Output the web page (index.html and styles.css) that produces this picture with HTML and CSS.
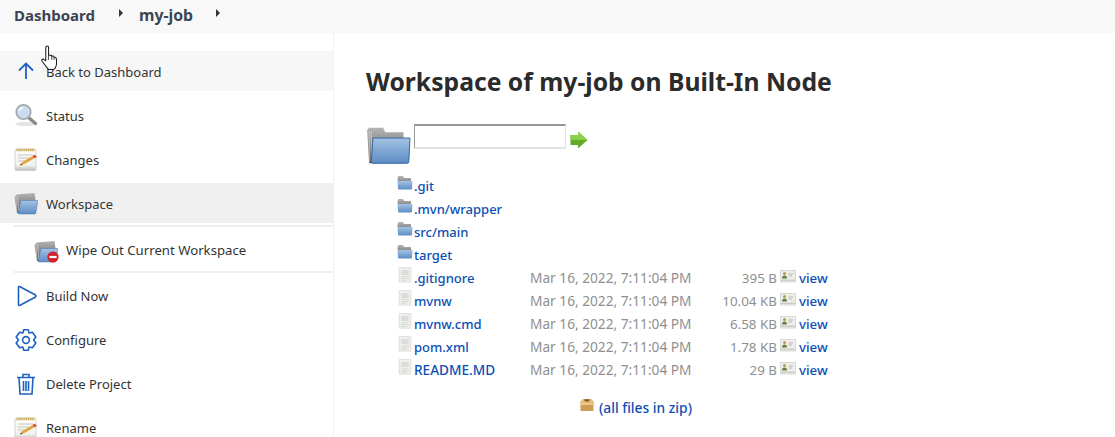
FILE: index.html
```html
<!DOCTYPE html>
<html lang="en">
<head>
<meta charset="utf-8">
<title>Workspace of my-job on Built-In Node</title>
<link rel="stylesheet" href="styles.css">
</head>
<body>
<svg class="defs" width="0" height="0" aria-hidden="true">
  <defs>
    <linearGradient id="fblue" x1="0" y1="0" x2="0" y2="1"><stop offset="0" stop-color="#a3c3e4"/><stop offset="1" stop-color="#5d8cc4"/></linearGradient>
    <linearGradient id="fgrey" x1="0" y1="0" x2="0" y2="1"><stop offset="0" stop-color="#b4b4b4"/><stop offset="1" stop-color="#5a5a5a"/></linearGradient>
    <linearGradient id="paper" x1="0" y1="0" x2="0" y2="1"><stop offset="0" stop-color="#fdfdf9"/><stop offset=".75" stop-color="#f2f2ee"/><stop offset="1" stop-color="#bdbdb9"/></linearGradient>
    <symbol id="folder-open" viewBox="0 0 24 24">
      <path d="M0.500 6 L3 3.500 L8 3 L20.500 2 L21.500 9 L20 22 H3 Z" fill="url(#fgrey)"/>
      <path d="M1.800 6 L3 21 M3.600 5 L4.800 21" stroke="#dcdcdc" stroke-width=".6"/>
      <path d="M7 9.500 H24 L21.800 22 Q21.600 23 20.600 23 H5 Q4 23 4.200 22 Z" fill="url(#fblue)" stroke="#4a78b0" stroke-width=".5"/>
    </symbol>
    <symbol id="big-folder" viewBox="0 0 42 38">
      <path d="M1 5 L3 3 H16 L18 7 H35 L36 36 H3 Z" fill="url(#fgrey)"/>
      <path d="M3 6 V34 M5 6 V34" stroke="#d8d8d8" stroke-width=".7"/>
      <path d="M6.500 12.500 H41 L40 34.500 Q40 36 38.500 36 H6 Q4.700 36 5 34.500 Z" fill="url(#fblue)" stroke="#34629c" stroke-width=".9"/>
    </symbol>
    <symbol id="folder" viewBox="0 0 16 16">
      <path d="M0.500 3 L1.500 1 H6 L7 3 H14 V13 H1 Z" fill="url(#fgrey)"/>
      <path d="M1 6 H15.500 L15 13.500 Q15 14.500 14 14.500 H2 Q1 14.500 1 13.500 Z" fill="url(#fblue)"/>
    </symbol>
    <symbol id="notepad" viewBox="0 0 24 24">
      <rect x="1" y="2" width="21" height="21.500" rx="1.500" fill="url(#paper)" stroke="#c4c4c0" stroke-width=".7"/>
      <path d="M2.500 3 H20.500" stroke="#c9ae5c" stroke-width="2.400" stroke-dasharray="1.400 .5"/>
      <path d="M4 8 H19 M4 11 H15 M4 14 H11" stroke="#c6c6c2" stroke-width="1"/>
      <path d="M6 18.500 L8 15.200 L18.500 9 L20.500 11.300 L9.500 17.500 Z" fill="#e2a43f"/>
      <path d="M18.500 9 L20.700 7.800 L23 10 L20.500 11.300 Z" fill="#d24a36"/>
      <path d="M6 18.500 L7 16.500 L8.300 17.800 Z" fill="#4a3a2a"/>
    </symbol>
    <symbol id="file" viewBox="0 0 16 18">
      <path d="M1 0 H15 V17.500 H1 Z" fill="#eeeeec"/>
      <path d="M1.500 .5 H14.500 V17 H1.500 Z" fill="none" stroke="#e0e0de"/>
      <path d="M4 3.500 H12 V9 H4 Z" fill="#dcdcda"/>
      <path d="M4 11 H12 M4 13 H12 M4 15 H10" stroke="#d6d6d3" stroke-width="1"/>
    </symbol>
    <symbol id="preview" viewBox="0 0 16 16">
      <rect x="0.500" y="1.500" width="15" height="11.500" fill="#eeeeea" stroke="#d8d8d4"/>
      <circle cx="4.500" cy="4.500" r="1.500" fill="#b89a50"/>
      <path d="M2 9.500 Q2 6.500 4.500 6.500 Q7 6.500 7 9.500 Z" fill="#6a7d3c"/>
      <path d="M8.500 5 H13 M8.500 7 H12" stroke="#b9b9b4"/>
      <path d="M1.500 11.200 H14.500" stroke="#8d8d88" stroke-dasharray="1 1"/>
    </symbol>
  </defs>
</svg>

<header class="crumbs">
  <a class="crumb" href="#">Dashboard</a>
  <span class="caret caret-one"></span>
  <a class="crumb crumb-job" href="#">my-job</a>
  <span class="caret caret-two"></span>
</header>

<div class="page">
  <nav class="side">
    <a class="task task-back task-low" href="#">
      <svg class="ico" viewBox="0 0 24 24"><path d="M12 20 V4.500 M5 11.500 L12 4.500 L19 11.500" fill="none" stroke="#1e62c0" stroke-width="1.800"/></svg>
      <span>Back to Dashboard</span>
    </a>
    <a class="task task-low" href="#">
      <svg class="ico" viewBox="0 0 24 24">
        <ellipse cx="11" cy="21" rx="10" ry="2" fill="#e4e4e4"/>
        <path d="M14.500 14.500 L21.500 20.500" stroke="#8b8b8b" stroke-width="3.400" stroke-linecap="round"/>
        <circle cx="9.500" cy="9" r="7.200" fill="#c9dcf2" stroke="#a7a9ac" stroke-width="1.800"/>
        <path d="M5 8 Q6 5 9 4.500" stroke="#fff" stroke-width="1.400" fill="none"/>
      </svg>
      <span>Status</span>
    </a>
    <a class="task task-low" href="#">
      <svg class="ico"><use href="#notepad"/></svg>
      <span>Changes</span>
    </a>
    <a class="task task-on task-low" href="#">
      <svg class="ico"><use href="#folder-open"/></svg>
      <span>Workspace</span>
    </a>
    <div class="subtasks">
      <a class="subtask task-low" href="#">
        <span class="wipe-ico">
          <svg class="ico"><use href="#folder-open"/></svg>
          <svg class="no-entry" viewBox="0 0 12 12"><circle cx="6" cy="6" r="5.600" fill="#d3202a"/><rect x="2.400" y="4.900" width="7.200" height="2.200" fill="#fff"/></svg>
        </span>
        <span class="wipe-label">Wipe Out Current Workspace</span>
      </a>
    </div>
    <a class="task" href="#">
      <svg class="ico" viewBox="0 0 24 24"><path d="M4.500 3.500 Q4.500 2 6 2.800 L21.500 11 Q22.500 12 21.500 13 L6 21.200 Q4.500 22 4.500 20.500 Z" fill="none" stroke="#1e62c0" stroke-width="1.600"/></svg>
      <span>Build Now</span>
    </a>
    <a class="task" href="#">
      <svg class="ico" viewBox="0 0 24 24">
        <path d="M9.800 1.800 H14.200 L15.200 5 L18.400 4.200 L21.800 9 L19.600 12 L21.800 15 L18.400 19.800 L15.200 19 L14.200 22.200 H9.800 L8.800 19 L5.600 19.800 L2.200 15 L4.400 12 L2.200 9 L5.600 4.200 L8.800 5 Z" fill="none" stroke="#1e62c0" stroke-width="1.600" stroke-linejoin="round"/>
        <circle cx="12" cy="12" r="3.400" fill="none" stroke="#1e62c0" stroke-width="1.600"/>
      </svg>
      <span>Configure</span>
    </a>
    <a class="task" href="#">
      <svg class="ico" viewBox="0 0 24 24">
        <path d="M3 5.500 H21 M9 5.500 V2.500 H15 V5.500 M5 5.500 L6 22 H18 L19 5.500 M9.500 9 V19 M12 9 V19 M14.500 9 V19" fill="none" stroke="#1e62c0" stroke-width="1.600"/>
      </svg>
      <span>Delete Project</span>
    </a>
    <a class="task" href="#">
      <svg class="ico"><use href="#notepad"/></svg>
      <span>Rename</span>
    </a>
  </nav>

  <main class="content">
    <h1 class="title">Workspace of my-job on Built-In Node</h1>
    <div class="pathbar">
      <svg class="big-folder"><use href="#big-folder"/></svg>
      <input class="path-input" type="text" aria-label="Path">
      <svg class="go" viewBox="0 0 18 18">
        <path d="M0.500 4 H8 V0.500 L17.500 9 L8 17.500 V14 H0.500 Z" fill="#62ab28"/>
        <path d="M0.500 4 H8 V0.500 L17.500 9 H0.500 Z" fill="#8dcf4b"/>
      </svg>
    </div>
    <div class="listing">
      <svg class="row-ico"><use href="#folder"/></svg><a class="name" href="#">.git</a><span></span><span></span><span></span><span></span>
      <svg class="row-ico"><use href="#folder"/></svg><a class="name" href="#">.mvn/wrapper</a><span></span><span></span><span></span><span></span>
      <svg class="row-ico"><use href="#folder"/></svg><a class="name" href="#">src/main</a><span></span><span></span><span></span><span></span>
      <svg class="row-ico"><use href="#folder"/></svg><a class="name" href="#">target</a><span></span><span></span><span></span><span></span>

      <svg class="row-ico"><use href="#file"/></svg><a class="name" href="#">.gitignore</a><span class="date">Mar 16, 2022, 7:11:04 PM</span><span class="size">395 B</span><svg class="prev"><use href="#preview"/></svg><a class="name name-view" href="#">view</a>
      <svg class="row-ico"><use href="#file"/></svg><a class="name" href="#">mvnw</a><span class="date">Mar 16, 2022, 7:11:04 PM</span><span class="size">10.04 KB</span><svg class="prev"><use href="#preview"/></svg><a class="name name-view" href="#">view</a>
      <svg class="row-ico"><use href="#file"/></svg><a class="name" href="#">mvnw.cmd</a><span class="date">Mar 16, 2022, 7:11:04 PM</span><span class="size">6.58 KB</span><svg class="prev"><use href="#preview"/></svg><a class="name name-view" href="#">view</a>
      <svg class="row-ico"><use href="#file"/></svg><a class="name" href="#">pom.xml</a><span class="date">Mar 16, 2022, 7:11:04 PM</span><span class="size">1.78 KB</span><svg class="prev"><use href="#preview"/></svg><a class="name name-view" href="#">view</a>
      <svg class="row-ico"><use href="#file"/></svg><a class="name name-caps" href="#">README.MD</a><span class="date">Mar 16, 2022, 7:11:04 PM</span><span class="size">29 B</span><svg class="prev"><use href="#preview"/></svg><a class="name name-view" href="#">view</a>
    </div>
    <div class="zip">
      <svg class="zip-ico" viewBox="0 0 16 14">
        <path d="M1.500 5 H14.500 V13 H1.500 Z" fill="#cf9c55"/>
        <path d="M1.500 5 H14.500 V7 H1.500 Z" fill="#efc98a"/>
        <path d="M0.500 5 L3.500 1 H12.500 L15.500 5 Z" fill="#e6bd78"/>
        <path d="M5 1.200 H11 L10 3.500 H6 Z" fill="#7d5d2c"/>
      </svg>
      <a class="name zip-link" href="#">(all files in zip)</a>
    </div>
  </main>
</div>

<svg class="cursor" viewBox="0 0 20 28">
  <path d="M6 2.500 Q6 1 7.500 1 Q9 1 9 2.500 V11 L11 11 Q12.500 11 12.500 12 Q14.500 11.500 15 13 Q17 13 17.500 15 V21 Q17 25 14.500 26.500 H9 L2 17.500 Q1 15.500 3 15 L6 17 Z" fill="#fff" stroke="#1a1a1a" stroke-width="1.100" stroke-linejoin="round"/>
  <path d="M9 11 V16 M12.500 12 V16 M15 13 V16" stroke="#1a1a1a" stroke-width=".9"/>
</svg>
</body>
</html>
```
FILE: styles.css
```css
* { box-sizing: border-box; }
html, body { margin: 0; height: 437px; overflow: hidden; }
body {
  position: relative;
  background: #fff;
  color: #333;
  font-family: "Noto Sans", "Open Sans", sans-serif;
  font-size: 13px;
}
a { text-decoration: none; color: inherit; }
.defs { position: absolute; }

.crumbs {
  display: flex;
  align-items: center;
  height: 33px;
  padding: 0 0 4px 14px;
  background: #f8f8f8;
}
.crumb { font-weight: 700; font-size: 15px; color: #3a4452; }
.crumb-job { font-size: 15.8px; }
.caret {
  width: 0;
  height: 0;
  margin-bottom: 3px;
  border-left: 4px solid #333;
  border-top: 4px solid transparent;
  border-bottom: 4px solid transparent;
}
.caret-one { margin-left: 24px; margin-right: 16px; }
.caret-two { margin-left: 23px; }

.page { display: flex; height: 404px; }
.side {
  flex: none;
  width: 334px;
  padding-top: 18px;
  border-right: 1px solid #f0f0f0;
}
.task {
  display: flex;
  align-items: center;
  gap: 8px;
  height: 40px;
  margin-bottom: 4px;
  padding-left: 14px;
  color: #333;
}
.task-low span { padding-top: 2px; }
.task-back { background: #f7f7f7; }
.task-on { background: #f0f0f0; margin-bottom: 2px; }
.ico { flex: none; width: 24px; height: 24px; }

.subtasks {
  margin: 0 0 3px 14px;
  border-top: 2px solid #edf0f2;
  border-bottom: 2px solid #edf0f2;
}
.subtask {
  display: flex;
  align-items: center;
  gap: 8px;
  height: 44px;
  padding-left: 20px;
}
.wipe-label { font-size: 13.2px; }
.wipe-ico { position: relative; display: block; width: 24px; height: 24px; padding: 0; }
.no-entry { position: absolute; right: -1px; bottom: -2px; width: 12px; height: 12px; }

.content { flex: 1; padding: 32px 0 0 32px; }
.title {
  margin: 0;
  font-size: 24.7px;
  line-height: 34px;
  font-weight: 700;
  color: #2b2b2b;
}
.pathbar {
  display: flex;
  align-items: flex-start;
  height: 41px;
  margin-top: 25px;
}
.big-folder { width: 48px; height: 42px; padding-right: 3px; flex: none; }
.path-input {
  width: 152px;
  height: 25px;
  margin-right: 4px;
  padding: 0;
  background: #fff;
  border-style: solid;
  border-color: #999 #e2e2e2 #e2e2e2 #999;
  border-width: 2px 1px 2px 1px;
}
.go { width: 18px; height: 18px; margin-top: 7px; flex: none; }

.listing {
  display: grid;
  grid-template-columns: 17px 116px 162px 85px 22px auto;
  grid-auto-rows: 23px;
  align-items: center;
  justify-content: start;
  margin: 9px 0 0 31px;
}
.row-ico { width: 16px; height: 16px; align-self: start; margin-top: 1px; }
.name { color: #0b4fb5; font-weight: 500; font-size: 13px; }
.name-caps { font-size: 13.6px; }
.name-view { font-size: 13.3px; }
.date { color: #8f8f8f; font-size: 13.7px; }
.size { color: #8f8f8f; font-size: 13.4px; text-align: right; }
.prev { width: 16px; height: 16px; margin: -2px 0 0 3px; }

.zip {
  display: flex;
  align-items: center;
  gap: 4px;
  margin: 17px 0 0 213px;
}
.zip-ico { width: 16px; height: 14px; margin-top: -5px; }
.zip-link { font-size: 13.8px; }

.cursor {
  position: absolute;
  left: 40px;
  top: 45px;
  width: 19px;
  height: 26px;
}
```
